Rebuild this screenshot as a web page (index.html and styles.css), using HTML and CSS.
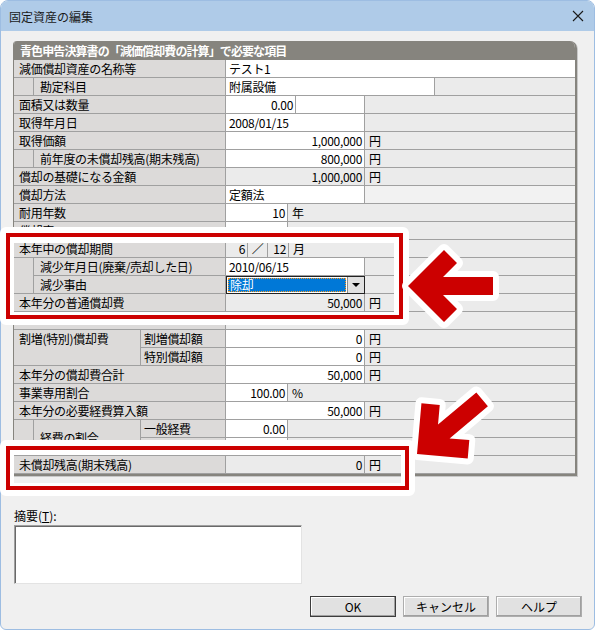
FILE: index.html
```html
<!DOCTYPE html>
<html lang="ja">
<head>
  <meta charset="UTF-8">
  <title>固定資産の編集</title>
  <link rel="stylesheet" href="styles.css">
</head>
<body>
  <div class="win">
    <div class="titlebar">
      <span>固定資産の編集</span>
      <svg class="close" width="12" height="12" viewBox="0 0 12 12"><path d="M1 1L11 11M11 1L1 11" stroke="#1a1a1a" stroke-width="1.1"/></svg>
    </div>
    <div class="content">
      <div class="sheet">
        <div class="sheet-head">青色申告決算書の「減価償却費の計算」で必要な項目</div>

        <div class="row">
          <div class="c lab">減価償却資産の名称等</div>
          <div class="c v fill">テスト1</div>
        </div>
        <div class="grp">
          <div class="stripe"></div>
          <div class="grp-rows">
            <div class="row">
              <div class="c lab-in">勘定科目</div>
              <div class="c v w209">附属設備</div>
            </div>
          </div>
        </div>
        <div class="row">
          <div class="c lab">面積又は数量</div>
          <div class="c v num w70">0.00</div>
          <div class="c v w69"></div>
        </div>
        <div class="row">
          <div class="c lab">取得年月日</div>
          <div class="c v w139">2008/01/15</div>
        </div>
        <div class="row">
          <div class="c lab">取得価額</div>
          <div class="c v num w139">1,000,000</div>
          <div class="unit">円</div>
        </div>
        <div class="grp">
          <div class="stripe"></div>
          <div class="grp-rows">
            <div class="row">
              <div class="c lab-in">前年度の未償却残高(期末残高)</div>
              <div class="c v num w139">800,000</div>
              <div class="unit">円</div>
            </div>
          </div>
        </div>
        <div class="row">
          <div class="c lab">償却の基礎になる金額</div>
          <div class="c num w139">1,000,000</div>
          <div class="unit">円</div>
        </div>
        <div class="row lite">
          <div class="c lab">償却方法</div>
          <div class="c v w139">定額法</div>
        </div>
        <div class="row">
          <div class="c lab">耐用年数</div>
          <div class="c v num w62">10</div>
          <div class="unit">年</div>
        </div>
        <div class="row">
          <div class="c lab">償却率</div>
          <div class="c v num w62">0.100</div>
        </div>
        <div class="row">
          <div class="c lab">本年中の償却期間</div>
          <div class="c num w22">6</div>
          <div class="c ctr w20">／</div>
          <div class="c num w21">12</div>
          <div class="unit">月</div>
        </div>
        <div class="grp">
          <div class="stripe"></div>
          <div class="grp-rows">
            <div class="row">
              <div class="c lab-in">減少年月日(廃棄/売却した日)</div>
              <div class="c v w139">2010/06/15</div>
            </div>
            <div class="row">
              <div class="c lab-in">減少事由</div>
              <div class="combo">
                <div class="sel">除却</div>
                <div class="drop"><span class="tri"></span></div>
              </div>
            </div>
          </div>
        </div>
        <div class="row">
          <div class="c lab">本年分の普通償却費</div>
          <div class="c num w139">50,000</div>
          <div class="unit">円</div>
        </div>
        <div class="row">
          <div class="c lab"></div>
        </div>
        <div class="grp">
          <div class="c lab-main">割増(特別)償却費</div>
          <div class="grp-rows">
            <div class="row">
              <div class="c sub">割増償却額</div>
              <div class="c v num w139">0</div>
              <div class="unit">円</div>
            </div>
            <div class="row">
              <div class="c sub">特別償却額</div>
              <div class="c v num w139">0</div>
              <div class="unit">円</div>
            </div>
          </div>
        </div>
        <div class="row">
          <div class="c lab">本年分の償却費合計</div>
          <div class="c v num w139">50,000</div>
          <div class="unit">円</div>
        </div>
        <div class="row">
          <div class="c lab">事業専用割合</div>
          <div class="c v num w62">100.00</div>
          <div class="unit">%</div>
        </div>
        <div class="row">
          <div class="c lab">本年分の必要経費算入額</div>
          <div class="c v num w139">50,000</div>
          <div class="unit">円</div>
        </div>
        <div class="grp">
          <div class="stripe"></div>
          <div class="c lab-main2">経費の割合</div>
          <div class="grp-rows">
            <div class="row">
              <div class="c sub">一般経費</div>
              <div class="c v num w62">0.00</div>
            </div>
            <div class="row">
              <div class="c sub">家事関連費</div>
              <div class="c v num w62">100.00</div>
            </div>
          </div>
        </div>
        <div class="row">
          <div class="c lab">未償却残高(期末残高)</div>
          <div class="c num w139">0</div>
          <div class="unit">円</div>
        </div>
      </div>

      <div class="memo-label">摘要(<u>T</u>):</div>
      <div class="memo-box"></div>

      <div class="buttons">
        <button class="btn def">OK</button>
        <button class="btn">キャンセル</button>
        <button class="btn">ヘルプ</button>
      </div>
    </div>
  </div>

  <!-- annotation marks over the screenshot -->
  <svg class="marks" width="595" height="630" viewBox="0 0 595 630">
    <path fill="#fff" fill-rule="evenodd" d="M6 227H403A6 6 0 0 1 409 233V319A6 6 0 0 1 403 325H6A6 6 0 0 1 0 319V233A6 6 0 0 1 6 227Z M14 243V312H394V243Z"/>
    <rect x="8" y="235" width="393" height="82" fill="none" stroke="#cc0000" stroke-width="4"/>
    <path fill="#fff" fill-rule="evenodd" d="M6 440H409A6 6 0 0 1 415 446V490A6 6 0 0 1 409 496H6A6 6 0 0 1 0 490V446A6 6 0 0 1 6 440Z M14 455V483H401V455Z"/>
    <rect x="8" y="448" width="399" height="40" fill="none" stroke="#cc0000" stroke-width="4"/>
    <polygon class="arrow" points="408,286 444,250 457,263 443,277 493,277 493,295 443,295 457,309 444,322"/>
    <polygon class="arrow" transform="translate(9 168) rotate(-40 408 286)" points="408,286 444,250 457,263 443,277 493,277 493,295 443,295 457,309 444,322"/>
  </svg>
</body>
</html>
```

FILE: styles.css
```css
* {
  box-sizing: border-box;
}
body {
  margin: 0;
  width: 595px;
  height: 630px;
  position: relative;
  background: #fff;
  font-family: "Noto Sans CJK JP", "Noto Sans", sans-serif;
  font-size: 12px;
  color: #000;
}
.win {
  width: 595px;
  height: 630px;
  border: 1px solid #9dbde2;
  border-radius: 8px 8px 6px 6px;
  background: #f0f0f0;
  overflow: hidden;
}
.titlebar {
  height: 30px;
  background: #afcbe8;
  display: flex;
  align-items: center;
  justify-content: space-between;
  padding: 0 10px 0 8px;
  color: #1a1a1a;
}
.close {
  display: block;
}
.content {
  padding: 10px 12px 0 12px;
}

/* sheet */
.sheet {
  width: 564px;
  border: solid #86847e;
  border-width: 0 2px 2px 1px;
  border-radius: 4px 7px 0 0;
  overflow: hidden;
  box-shadow: 1px 1px 0 #c8c8c8;
  letter-spacing: -0.3px;
}
.sheet-head {
  height: 19px;
  line-height: 19px;
  background: #86847e;
  color: #fff;
  font-weight: bold;
  padding-left: 6px;
  letter-spacing: -0.9px;
}
.row {
  display: flex;
  height: 18px;
  border-bottom: 1px solid #a0a0a0;
  background: #ebebeb;
}
.row.lite {
  background: #f2f2f2;
}
.grp {
  display: flex;
}
.grp-rows {
  flex: 1;
  min-width: 0;
}
.stripe {
  flex: none;
  width: 20px;
  background: #dcdad9;
  border-right: 1px solid #a0a0a0;
  border-bottom: 1px solid #a0a0a0;
}
.c {
  flex: none;
  height: 17px;
  line-height: 17px;
  border-right: 1px solid #a0a0a0;
  padding: 0 2px 0 3px;
  white-space: nowrap;
  overflow: hidden;
}
.lab,
.lab-in,
.lab-main,
.lab-main2,
.sub {
  background: #dcdad9;
}
.lab {
  width: 212px;
  padding-left: 5px;
}
.lab-in {
  width: 192px;
  padding-left: 6px;
}
.lab-main {
  width: 127px;
  height: auto;
  padding-left: 5px;
  border-bottom: 1px solid #a0a0a0;
}
.lab-main2 {
  width: 107px;
  height: auto;
  padding-left: 6px;
  border-bottom: 1px solid #a0a0a0;
  display: flex;
  align-items: center;
}
.sub {
  width: 85px;
  padding-left: 3px;
}
.v {
  background: #fff;
}
.fill {
  flex: 1;
  border-right: none;
}
.num {
  text-align: right;
}
.ctr {
  text-align: center;
  padding: 0;
}
.w209 { width: 209px; }
.w139 { width: 139px; }
.w70 { width: 70px; }
.w69 { width: 69px; }
.w62 { width: 62px; }
.w22 { width: 22px; }
.w21 { width: 21px; }
.w20 { width: 20px; }
.unit {
  line-height: 17px;
  padding-left: 4px;
}

/* combo box */
.combo {
  flex: none;
  width: 139px;
  height: 18px;
  margin-top: 0;
  border: 1px solid #222;
  background: #fff;
  display: flex;
}
.sel {
  flex: 1;
  margin: 1px;
  background: #0078d7;
  color: #fff;
  line-height: 14px;
  padding-left: 2px;
  outline: 1px dotted #ff9a1f;
  outline-offset: -1px;
}
.drop {
  width: 17px;
  background: #e1e1e1;
  border-left: 1px solid #8a8a8a;
  display: flex;
  align-items: center;
  justify-content: center;
}
.tri {
  width: 0;
  height: 0;
  border-left: 4px solid transparent;
  border-right: 4px solid transparent;
  border-top: 4px solid #000;
}

/* memo + buttons */
.memo-label {
  margin-top: 31px;
  padding-left: 1px;
  line-height: 17px;
}
.memo-box {
  margin: 1px 0 0 1px;
  width: 288px;
  height: 59px;
  background: #fff;
  border: 1px solid;
  border-color: #a0a0a0 #e3e3e3 #e3e3e3 #a0a0a0;
  box-shadow: inset 1px 1px 0 #696969;
}
.buttons {
  display: flex;
  justify-content: flex-end;
  gap: 7px;
  margin-top: 12px;
}
.btn {
  width: 86px;
  height: 21px;
  padding: 0;
  background: #e1e1e1;
  border: 1px solid #adadad;
  box-shadow: inset -1px -1px 0 #a0a0a0, inset 1px 1px 0 #fff;
  font-family: inherit;
  font-size: 12px;
  color: #000;
}
.btn.def {
  border-color: #3c3c3c;
}

/* annotations */
.marks {
  position: absolute;
  left: 0;
  top: 0;
  pointer-events: none;
}
.arrow {
  fill: #cc0000;
  stroke: #fff;
  stroke-width: 12;
  stroke-linejoin: round;
  paint-order: stroke;
}
```
